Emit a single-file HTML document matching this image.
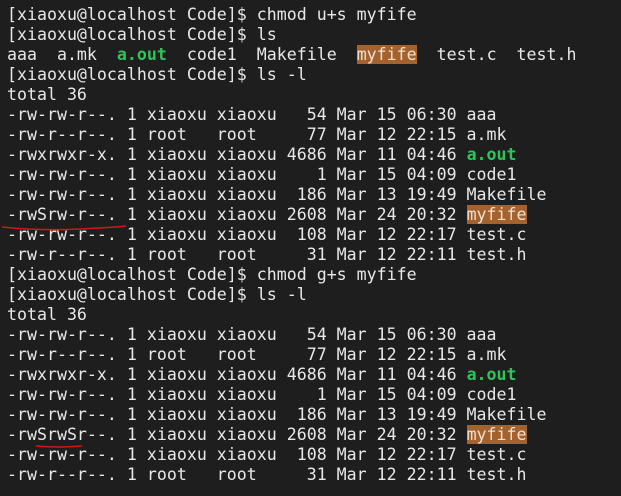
<!DOCTYPE html>
<html><head><meta charset="utf-8"><style>
html,body{margin:0;padding:0;background:#1e1e1e;width:621px;height:496px;overflow:hidden}
pre{margin:0;position:absolute;left:7px;top:5px;font-family:"DejaVu Sans Mono","Liberation Mono",monospace;font-size:16.6px;line-height:20px;color:#e8e8e8;}
.g{color:#2fc45a;font-weight:bold}
.h{background:#a4622e;color:#f0e0d0}
svg{position:absolute;left:0;top:0}
</style></head><body>
<pre>[xiaoxu@localhost Code]$ chmod u+s myfife
[xiaoxu@localhost Code]$ ls
aaa  a.mk  <span class="g">a.out</span>  code1  Makefile  <span class="h">myfife</span>  test.c  test.h
[xiaoxu@localhost Code]$ ls -l
total 36
-rw-rw-r--. 1 xiaoxu xiaoxu   54 Mar 15 06:30 aaa
-rw-r--r--. 1 root   root     77 Mar 12 22:15 a.mk
-rwxrwxr-x. 1 xiaoxu xiaoxu 4686 Mar 11 04:46 <span class="g">a.out</span>
-rw-rw-r--. 1 xiaoxu xiaoxu    1 Mar 15 04:09 code1
-rw-rw-r--. 1 xiaoxu xiaoxu  186 Mar 13 19:49 Makefile
-rwSrw-r--. 1 xiaoxu xiaoxu 2608 Mar 24 20:32 <span class="h">myfife</span>
-rw-rw-r--. 1 xiaoxu xiaoxu  108 Mar 12 22:17 test.c
-rw-r--r--. 1 root   root     31 Mar 12 22:11 test.h
[xiaoxu@localhost Code]$ chmod g+s myfife
[xiaoxu@localhost Code]$ ls -l
total 36
-rw-rw-r--. 1 xiaoxu xiaoxu   54 Mar 15 06:30 aaa
-rw-r--r--. 1 root   root     77 Mar 12 22:15 a.mk
-rwxrwxr-x. 1 xiaoxu xiaoxu 4686 Mar 11 04:46 <span class="g">a.out</span>
-rw-rw-r--. 1 xiaoxu xiaoxu    1 Mar 15 04:09 code1
-rw-rw-r--. 1 xiaoxu xiaoxu  186 Mar 13 19:49 Makefile
-rwSrwSr--. 1 xiaoxu xiaoxu 2608 Mar 24 20:32 <span class="h">myfife</span>
-rw-rw-r--. 1 xiaoxu xiaoxu  108 Mar 12 22:17 test.c
-rw-r--r--. 1 root   root     31 Mar 12 22:11 test.h</pre>
<svg width="621" height="496"><path d="M2 227 Q40 231 80 229 T126 226" stroke="#d01818" stroke-width="1.6" fill="none"/><path d="M36 446 Q58 448 82 446" stroke="#d01818" stroke-width="1.6" fill="none"/></svg>
</body></html>
